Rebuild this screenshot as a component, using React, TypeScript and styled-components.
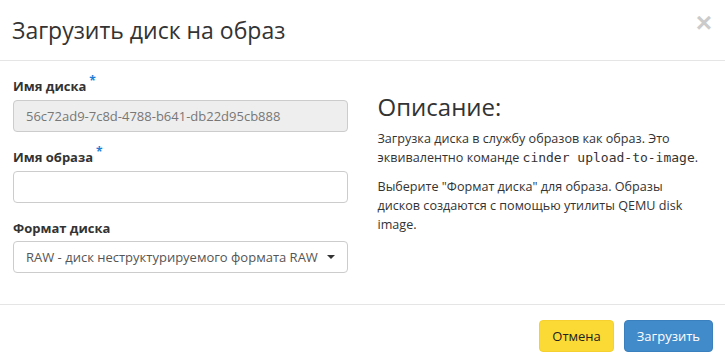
import React from 'react'
import styled, { createGlobalStyle } from 'styled-components'

const GlobalStyle = createGlobalStyle`
  html, body {
    margin: 0;
    padding: 0;
    background: #fff;
  }
  body {
    font-family: 'Open Sans', 'Liberation Sans', sans-serif;
    font-size: 13px;
    color: #333;
  }
  * {
    box-sizing: border-box;
  }
`

const Modal = styled.div`
  width: 725px;
  height: 363px;
  overflow: hidden;
  background: #fff;
`

const Header = styled.div`
  display: flex;
  align-items: flex-start;
  justify-content: space-between;
  padding: 15px 13px 15px 12px;
  border-bottom: 1px solid #e5e5e5;
`

const Title = styled.h4`
  margin: 0;
  font-size: 23px;
  font-weight: 400;
  line-height: 30px;
  color: #333;
`

const Close = styled.button`
  border: 0;
  background: transparent;
  padding: 0;
  margin-top: -6px;
  font-family: 'Liberation Sans', sans-serif;
  font-size: 28px;
  font-weight: 700;
  line-height: 1;
  color: #000;
  opacity: 0.2;
  cursor: pointer;
`

const Body = styled.div`
  display: grid;
  grid-template-columns: 1fr 1fr;
  column-gap: 30px;
  padding: 16px 13px 31px;
`

const FormColumn = styled.div`
  display: flex;
  flex-direction: column;
  gap: 16px;
`

const Field = styled.div`
  display: flex;
  flex-direction: column;
  gap: 4px;
`

const Label = styled.label`
  font-size: 13px;
  font-weight: 700;
  line-height: 18px;
  color: #333;
`

const Required = styled.span`
  position: relative;
  top: -6px;
  margin-left: 3px;
  font-size: 12px;
  color: #1c7ed6;
`

const Input = styled.input<{ $disabled?: boolean }>`
  height: 32px;
  width: 100%;
  padding: 6px 12px;
  font-family: 'Open Sans', 'Liberation Sans', sans-serif;
  font-size: 13px;
  color: ${p => (p.$disabled ? '#777' : '#555')};
  background: ${p => (p.$disabled ? '#eee' : '#fff')};
  border: 1px solid #ccc;
  border-radius: 4px;
  outline: none;
`

const Select = styled.div`
  display: flex;
  align-items: center;
  justify-content: space-between;
  height: 32px;
  padding: 0 12px;
  font-size: 13px;
  color: #555;
  background: #fff;
  border: 1px solid #ccc;
  border-radius: 4px;
`

const Caret = styled.span`
  width: 0;
  height: 0;
  border-left: 4px solid transparent;
  border-right: 4px solid transparent;
  border-top: 4px solid #333;
  margin-left: 8px;
`

const Help = styled.div`
  padding-top: 17px;
`

const HelpTitle = styled.h3`
  margin: 0 0 9px;
  font-size: 24px;
  font-weight: 400;
  line-height: 26px;
  color: #333;
`

const HelpText = styled.p`
  margin: 0 0 10px;
  font-size: 12.6px;
  line-height: 19px;
  color: #333;
`

const Code = styled.code`
  font-family: 'DejaVu Sans Mono', 'Liberation Mono', monospace;
  font-size: 13px;
  line-height: 1;
  color: #333;
`

const Footer = styled.div`
  display: flex;
  justify-content: flex-end;
  gap: 10px;
  padding: 15px 12px;
  border-top: 1px solid #e5e5e5;
`

const Button = styled.button<{ $variant: 'cancel' | 'primary' }>`
  height: 32px;
  padding: 0 12px;
  font-family: 'Open Sans', 'Liberation Sans', sans-serif;
  font-size: 13px;
  border-radius: 4px;
  cursor: pointer;
  border: 1px solid ${p => (p.$variant === 'primary' ? '#3a80bf' : '#f5d02f')};
  background: ${p => (p.$variant === 'primary' ? '#428bca' : '#fcda35')};
  color: ${p => (p.$variant === 'primary' ? '#fff' : '#222')};
`

export default function App() {
  return (
    <>
      <GlobalStyle />
      <Modal>
        <Header>
          <Title>Загрузить диск на образ</Title>
          <Close aria-label="Закрыть">×</Close>
        </Header>
        <Body>
          <FormColumn>
            <Field>
              <Label>
                Имя диска<Required>*</Required>
              </Label>
              <Input $disabled readOnly value="56c72ad9-7c8d-4788-b641-db22d95cb888" />
            </Field>
            <Field>
              <Label>
                Имя образа<Required>*</Required>
              </Label>
              <Input />
            </Field>
            <Field>
              <Label>Формат диска</Label>
              <Select>
                <span>RAW - диск неструктурируемого формата RAW</span>
                <Caret />
              </Select>
            </Field>
          </FormColumn>
          <Help>
            <HelpTitle>Описание:</HelpTitle>
            <HelpText>
              Загрузка диска в службу образов как образ. Это эквивалентно команде{' '}
              <Code>cinder upload-to-image</Code>.
            </HelpText>
            <HelpText>
              Выберите "Формат диска" для образа. Образы
              <br />
              дисков создаются с помощью утилиты QEMU disk image.
            </HelpText>
          </Help>
        </Body>
        <Footer>
          <Button $variant="cancel">Отмена</Button>
          <Button $variant="primary">Загрузить</Button>
        </Footer>
      </Modal>
    </>
  )
}
